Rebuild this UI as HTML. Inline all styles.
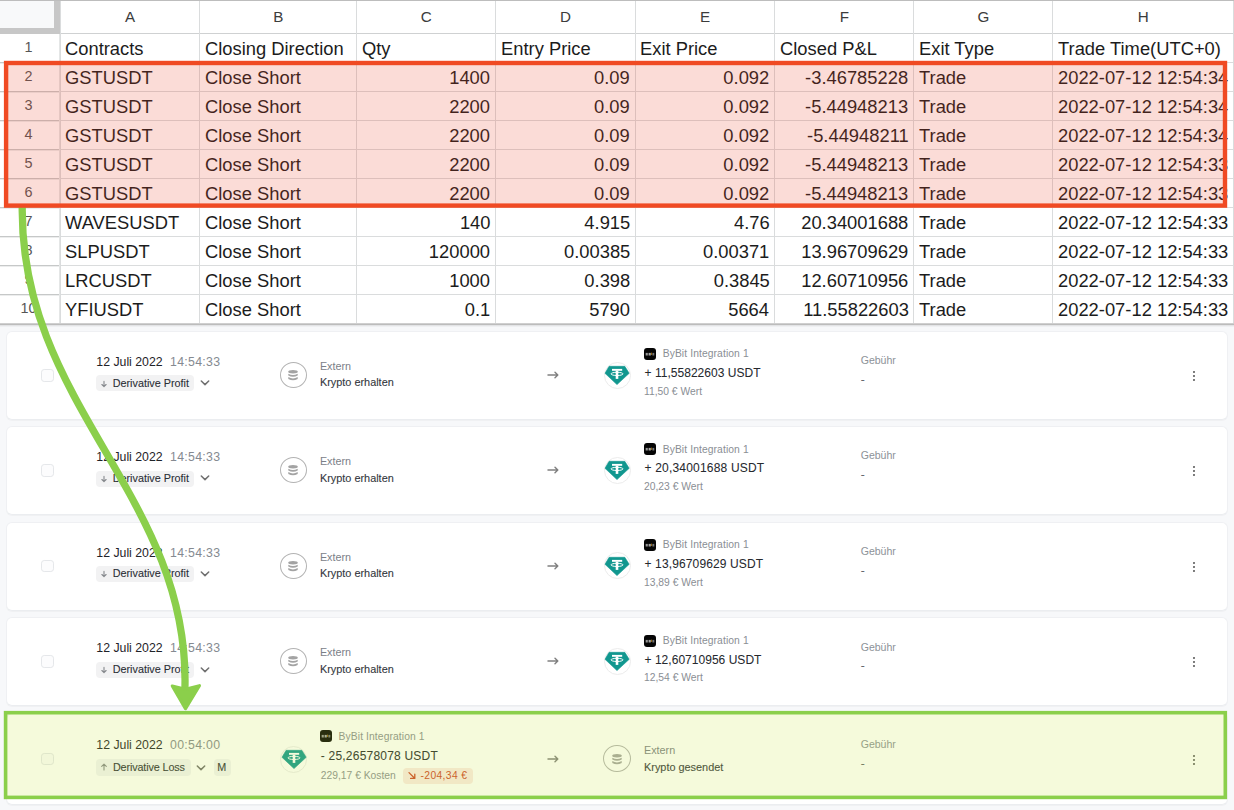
<!DOCTYPE html>
<html><head><meta charset="utf-8"><style>
html,body{margin:0;padding:0;width:1234px;height:810px;overflow:hidden;background:#f7f8fa}
body{position:relative;font-family:"Liberation Sans", sans-serif}
.t{position:absolute;white-space:nowrap}
.r{position:absolute}
</style></head><body>
<div class="r" style="left:0px;top:0px;width:1234px;height:324px;background:#fff"></div>
<div class="r" style="left:0px;top:1px;width:54px;height:27px;background:#f8f9fa"></div>
<div class="r" style="left:54px;top:0px;width:6px;height:33.7px;background:#c7c7c7"></div>
<div class="r" style="left:0px;top:28px;width:60px;height:5.7px;background:#c7c7c7"></div>
<div class="r" style="left:0px;top:0px;width:1234px;height:1px;background:#bdbdbd"></div>
<div class="r" style="left:60px;top:33px;width:1174px;height:1px;background:#cfd1d2"></div>
<div class="r" style="left:60px;top:62px;width:1174px;height:1px;background:#dadcdd"></div>
<div class="r" style="left:0px;top:62px;width:60px;height:1px;background:#c6c8c8"></div>
<div class="r" style="left:0px;top:63px;width:60px;height:1px;background:#eceded"></div>
<div class="r" style="left:60px;top:91px;width:1174px;height:1px;background:#dadcdd"></div>
<div class="r" style="left:0px;top:91px;width:60px;height:1px;background:#c6c8c8"></div>
<div class="r" style="left:0px;top:92px;width:60px;height:1px;background:#eceded"></div>
<div class="r" style="left:60px;top:120px;width:1174px;height:1px;background:#dadcdd"></div>
<div class="r" style="left:0px;top:120px;width:60px;height:1px;background:#c6c8c8"></div>
<div class="r" style="left:0px;top:121px;width:60px;height:1px;background:#eceded"></div>
<div class="r" style="left:60px;top:149px;width:1174px;height:1px;background:#dadcdd"></div>
<div class="r" style="left:0px;top:149px;width:60px;height:1px;background:#c6c8c8"></div>
<div class="r" style="left:0px;top:150px;width:60px;height:1px;background:#eceded"></div>
<div class="r" style="left:60px;top:178px;width:1174px;height:1px;background:#dadcdd"></div>
<div class="r" style="left:0px;top:178px;width:60px;height:1px;background:#c6c8c8"></div>
<div class="r" style="left:0px;top:179px;width:60px;height:1px;background:#eceded"></div>
<div class="r" style="left:60px;top:207px;width:1174px;height:1px;background:#dadcdd"></div>
<div class="r" style="left:0px;top:207px;width:60px;height:1px;background:#c6c8c8"></div>
<div class="r" style="left:0px;top:208px;width:60px;height:1px;background:#eceded"></div>
<div class="r" style="left:60px;top:236px;width:1174px;height:1px;background:#dadcdd"></div>
<div class="r" style="left:0px;top:236px;width:60px;height:1px;background:#c6c8c8"></div>
<div class="r" style="left:0px;top:237px;width:60px;height:1px;background:#eceded"></div>
<div class="r" style="left:60px;top:265px;width:1174px;height:1px;background:#dadcdd"></div>
<div class="r" style="left:0px;top:265px;width:60px;height:1px;background:#c6c8c8"></div>
<div class="r" style="left:0px;top:266px;width:60px;height:1px;background:#eceded"></div>
<div class="r" style="left:60px;top:294px;width:1174px;height:1px;background:#dadcdd"></div>
<div class="r" style="left:0px;top:294px;width:60px;height:1px;background:#c6c8c8"></div>
<div class="r" style="left:0px;top:295px;width:60px;height:1px;background:#eceded"></div>
<div class="r" style="left:0px;top:323px;width:1234px;height:1px;background:#cfcfcf"></div>
<div class="r" style="left:0px;top:324px;width:1234px;height:1px;background:#bcbcbc"></div>
<div class="r" style="left:59.5px;top:1px;width:1px;height:322px;background:#dadcdd"></div>
<div class="r" style="left:59px;top:34px;width:1px;height:289px;background:#e4e6e6"></div>
<div class="r" style="left:199px;top:1px;width:1px;height:322px;background:#dadcdd"></div>
<div class="r" style="left:356px;top:1px;width:1px;height:322px;background:#dadcdd"></div>
<div class="r" style="left:495px;top:1px;width:1px;height:322px;background:#dadcdd"></div>
<div class="r" style="left:634.5px;top:1px;width:1px;height:322px;background:#dadcdd"></div>
<div class="r" style="left:774px;top:1px;width:1px;height:322px;background:#dadcdd"></div>
<div class="r" style="left:913px;top:1px;width:1px;height:322px;background:#dadcdd"></div>
<div class="r" style="left:1052.4px;top:1px;width:1px;height:322px;background:#dadcdd"></div>
<div class="r" style="left:1232.5px;top:1px;width:1px;height:322px;background:#dadcdd"></div>
<div class="r" style="left:0px;top:325px;width:1234px;height:1px;background:#e3e4e6"></div>
<div class="r" style="left:0px;top:326px;width:1234px;height:1px;background:#eff0f2"></div>
<div class="t" style="left:-169.95px;width:600px;text-align:center;top:7.69px;font-size:15.2px;line-height:17.48px;color:#3c3c3c;font-weight:400;">A</div>
<div class="t" style="left:-21.70px;width:600px;text-align:center;top:7.69px;font-size:15.2px;line-height:17.48px;color:#3c3c3c;font-weight:400;">B</div>
<div class="t" style="left:126.30px;width:600px;text-align:center;top:7.69px;font-size:15.2px;line-height:17.48px;color:#3c3c3c;font-weight:400;">C</div>
<div class="t" style="left:265.55px;width:600px;text-align:center;top:7.69px;font-size:15.2px;line-height:17.48px;color:#3c3c3c;font-weight:400;">D</div>
<div class="t" style="left:405.05px;width:600px;text-align:center;top:7.69px;font-size:15.2px;line-height:17.48px;color:#3c3c3c;font-weight:400;">E</div>
<div class="t" style="left:544.30px;width:600px;text-align:center;top:7.69px;font-size:15.2px;line-height:17.48px;color:#3c3c3c;font-weight:400;">F</div>
<div class="t" style="left:683.50px;width:600px;text-align:center;top:7.69px;font-size:15.2px;line-height:17.48px;color:#3c3c3c;font-weight:400;">G</div>
<div class="t" style="left:843.30px;width:600px;text-align:center;top:7.69px;font-size:15.2px;line-height:17.48px;color:#3c3c3c;font-weight:400;">H</div>
<div class="t" style="left:-271.40px;width:600px;text-align:center;top:38.73px;font-size:14.4px;line-height:16.56px;color:#555;font-weight:400;">1</div>
<div class="t" style="left:-271.40px;width:600px;text-align:center;top:67.73px;font-size:14.4px;line-height:16.56px;color:#555;font-weight:400;">2</div>
<div class="t" style="left:-271.40px;width:600px;text-align:center;top:96.73px;font-size:14.4px;line-height:16.56px;color:#555;font-weight:400;">3</div>
<div class="t" style="left:-271.40px;width:600px;text-align:center;top:125.73px;font-size:14.4px;line-height:16.56px;color:#555;font-weight:400;">4</div>
<div class="t" style="left:-271.40px;width:600px;text-align:center;top:154.73px;font-size:14.4px;line-height:16.56px;color:#555;font-weight:400;">5</div>
<div class="t" style="left:-271.40px;width:600px;text-align:center;top:183.73px;font-size:14.4px;line-height:16.56px;color:#555;font-weight:400;">6</div>
<div class="t" style="left:-271.40px;width:600px;text-align:center;top:212.73px;font-size:14.4px;line-height:16.56px;color:#555;font-weight:400;">7</div>
<div class="t" style="left:-271.40px;width:600px;text-align:center;top:241.73px;font-size:14.4px;line-height:16.56px;color:#555;font-weight:400;">8</div>
<div class="t" style="left:-271.40px;width:600px;text-align:center;top:270.73px;font-size:14.4px;line-height:16.56px;color:#555;font-weight:400;">9</div>
<div class="t" style="left:-271.40px;width:600px;text-align:center;top:299.73px;font-size:14.4px;line-height:16.56px;color:#555;font-weight:400;">10</div>
<div class="t" style="left:65.00px;top:38.09px;font-size:18.9px;line-height:21.73px;color:#1c1c1c;font-weight:400;transform:scaleX(0.971);transform-origin:left 50%">Contracts</div>
<div class="t" style="left:204.50px;top:38.09px;font-size:18.9px;line-height:21.73px;color:#1c1c1c;font-weight:400;transform:scaleX(0.971);transform-origin:left 50%">Closing Direction</div>
<div class="t" style="left:361.50px;top:38.09px;font-size:18.9px;line-height:21.73px;color:#1c1c1c;font-weight:400;transform:scaleX(0.971);transform-origin:left 50%">Qty</div>
<div class="t" style="left:500.50px;top:38.09px;font-size:18.9px;line-height:21.73px;color:#1c1c1c;font-weight:400;transform:scaleX(0.971);transform-origin:left 50%">Entry Price</div>
<div class="t" style="left:640.00px;top:38.09px;font-size:18.9px;line-height:21.73px;color:#1c1c1c;font-weight:400;transform:scaleX(0.971);transform-origin:left 50%">Exit Price</div>
<div class="t" style="left:779.50px;top:38.09px;font-size:18.9px;line-height:21.73px;color:#1c1c1c;font-weight:400;transform:scaleX(0.971);transform-origin:left 50%">Closed P&amp;L</div>
<div class="t" style="left:918.50px;top:38.09px;font-size:18.9px;line-height:21.73px;color:#1c1c1c;font-weight:400;transform:scaleX(0.971);transform-origin:left 50%">Exit Type</div>
<div class="t" style="left:1057.90px;top:38.09px;font-size:18.9px;line-height:21.73px;color:#1c1c1c;font-weight:400;transform:scaleX(0.971);transform-origin:left 50%">Trade Time(UTC+0)</div>
<div class="t" style="left:65.00px;top:67.09px;font-size:18.9px;line-height:21.73px;color:#1c1c1c;font-weight:400;transform:scaleX(0.971);transform-origin:left 50%">GSTUSDT</div>
<div class="t" style="left:204.50px;top:67.09px;font-size:18.9px;line-height:21.73px;color:#1c1c1c;font-weight:400;transform:scaleX(0.971);transform-origin:left 50%">Close Short</div>
<div class="t" style="right:743.50px;top:67.09px;font-size:18.9px;line-height:21.73px;color:#1c1c1c;font-weight:400;transform:scaleX(0.971);transform-origin:right 50%">1400</div>
<div class="t" style="right:604.00px;top:67.09px;font-size:18.9px;line-height:21.73px;color:#1c1c1c;font-weight:400;transform:scaleX(0.971);transform-origin:right 50%">0.09</div>
<div class="t" style="right:464.50px;top:67.09px;font-size:18.9px;line-height:21.73px;color:#1c1c1c;font-weight:400;transform:scaleX(0.971);transform-origin:right 50%">0.092</div>
<div class="t" style="right:325.50px;top:67.09px;font-size:18.9px;line-height:21.73px;color:#1c1c1c;font-weight:400;transform:scaleX(0.971);transform-origin:right 50%">-3.46785228</div>
<div class="t" style="left:918.50px;top:67.09px;font-size:18.9px;line-height:21.73px;color:#1c1c1c;font-weight:400;transform:scaleX(0.971);transform-origin:left 50%">Trade</div>
<div class="t" style="left:1057.90px;top:67.09px;font-size:18.9px;line-height:21.73px;color:#1c1c1c;font-weight:400;transform:scaleX(0.971);transform-origin:left 50%">2022-07-12 12:54:34</div>
<div class="t" style="left:65.00px;top:96.09px;font-size:18.9px;line-height:21.73px;color:#1c1c1c;font-weight:400;transform:scaleX(0.971);transform-origin:left 50%">GSTUSDT</div>
<div class="t" style="left:204.50px;top:96.09px;font-size:18.9px;line-height:21.73px;color:#1c1c1c;font-weight:400;transform:scaleX(0.971);transform-origin:left 50%">Close Short</div>
<div class="t" style="right:743.50px;top:96.09px;font-size:18.9px;line-height:21.73px;color:#1c1c1c;font-weight:400;transform:scaleX(0.971);transform-origin:right 50%">2200</div>
<div class="t" style="right:604.00px;top:96.09px;font-size:18.9px;line-height:21.73px;color:#1c1c1c;font-weight:400;transform:scaleX(0.971);transform-origin:right 50%">0.09</div>
<div class="t" style="right:464.50px;top:96.09px;font-size:18.9px;line-height:21.73px;color:#1c1c1c;font-weight:400;transform:scaleX(0.971);transform-origin:right 50%">0.092</div>
<div class="t" style="right:325.50px;top:96.09px;font-size:18.9px;line-height:21.73px;color:#1c1c1c;font-weight:400;transform:scaleX(0.971);transform-origin:right 50%">-5.44948213</div>
<div class="t" style="left:918.50px;top:96.09px;font-size:18.9px;line-height:21.73px;color:#1c1c1c;font-weight:400;transform:scaleX(0.971);transform-origin:left 50%">Trade</div>
<div class="t" style="left:1057.90px;top:96.09px;font-size:18.9px;line-height:21.73px;color:#1c1c1c;font-weight:400;transform:scaleX(0.971);transform-origin:left 50%">2022-07-12 12:54:34</div>
<div class="t" style="left:65.00px;top:125.09px;font-size:18.9px;line-height:21.73px;color:#1c1c1c;font-weight:400;transform:scaleX(0.971);transform-origin:left 50%">GSTUSDT</div>
<div class="t" style="left:204.50px;top:125.09px;font-size:18.9px;line-height:21.73px;color:#1c1c1c;font-weight:400;transform:scaleX(0.971);transform-origin:left 50%">Close Short</div>
<div class="t" style="right:743.50px;top:125.09px;font-size:18.9px;line-height:21.73px;color:#1c1c1c;font-weight:400;transform:scaleX(0.971);transform-origin:right 50%">2200</div>
<div class="t" style="right:604.00px;top:125.09px;font-size:18.9px;line-height:21.73px;color:#1c1c1c;font-weight:400;transform:scaleX(0.971);transform-origin:right 50%">0.09</div>
<div class="t" style="right:464.50px;top:125.09px;font-size:18.9px;line-height:21.73px;color:#1c1c1c;font-weight:400;transform:scaleX(0.971);transform-origin:right 50%">0.092</div>
<div class="t" style="right:325.50px;top:125.09px;font-size:18.9px;line-height:21.73px;color:#1c1c1c;font-weight:400;transform:scaleX(0.971);transform-origin:right 50%">-5.44948211</div>
<div class="t" style="left:918.50px;top:125.09px;font-size:18.9px;line-height:21.73px;color:#1c1c1c;font-weight:400;transform:scaleX(0.971);transform-origin:left 50%">Trade</div>
<div class="t" style="left:1057.90px;top:125.09px;font-size:18.9px;line-height:21.73px;color:#1c1c1c;font-weight:400;transform:scaleX(0.971);transform-origin:left 50%">2022-07-12 12:54:34</div>
<div class="t" style="left:65.00px;top:154.09px;font-size:18.9px;line-height:21.73px;color:#1c1c1c;font-weight:400;transform:scaleX(0.971);transform-origin:left 50%">GSTUSDT</div>
<div class="t" style="left:204.50px;top:154.09px;font-size:18.9px;line-height:21.73px;color:#1c1c1c;font-weight:400;transform:scaleX(0.971);transform-origin:left 50%">Close Short</div>
<div class="t" style="right:743.50px;top:154.09px;font-size:18.9px;line-height:21.73px;color:#1c1c1c;font-weight:400;transform:scaleX(0.971);transform-origin:right 50%">2200</div>
<div class="t" style="right:604.00px;top:154.09px;font-size:18.9px;line-height:21.73px;color:#1c1c1c;font-weight:400;transform:scaleX(0.971);transform-origin:right 50%">0.09</div>
<div class="t" style="right:464.50px;top:154.09px;font-size:18.9px;line-height:21.73px;color:#1c1c1c;font-weight:400;transform:scaleX(0.971);transform-origin:right 50%">0.092</div>
<div class="t" style="right:325.50px;top:154.09px;font-size:18.9px;line-height:21.73px;color:#1c1c1c;font-weight:400;transform:scaleX(0.971);transform-origin:right 50%">-5.44948213</div>
<div class="t" style="left:918.50px;top:154.09px;font-size:18.9px;line-height:21.73px;color:#1c1c1c;font-weight:400;transform:scaleX(0.971);transform-origin:left 50%">Trade</div>
<div class="t" style="left:1057.90px;top:154.09px;font-size:18.9px;line-height:21.73px;color:#1c1c1c;font-weight:400;transform:scaleX(0.971);transform-origin:left 50%">2022-07-12 12:54:33</div>
<div class="t" style="left:65.00px;top:183.09px;font-size:18.9px;line-height:21.73px;color:#1c1c1c;font-weight:400;transform:scaleX(0.971);transform-origin:left 50%">GSTUSDT</div>
<div class="t" style="left:204.50px;top:183.09px;font-size:18.9px;line-height:21.73px;color:#1c1c1c;font-weight:400;transform:scaleX(0.971);transform-origin:left 50%">Close Short</div>
<div class="t" style="right:743.50px;top:183.09px;font-size:18.9px;line-height:21.73px;color:#1c1c1c;font-weight:400;transform:scaleX(0.971);transform-origin:right 50%">2200</div>
<div class="t" style="right:604.00px;top:183.09px;font-size:18.9px;line-height:21.73px;color:#1c1c1c;font-weight:400;transform:scaleX(0.971);transform-origin:right 50%">0.09</div>
<div class="t" style="right:464.50px;top:183.09px;font-size:18.9px;line-height:21.73px;color:#1c1c1c;font-weight:400;transform:scaleX(0.971);transform-origin:right 50%">0.092</div>
<div class="t" style="right:325.50px;top:183.09px;font-size:18.9px;line-height:21.73px;color:#1c1c1c;font-weight:400;transform:scaleX(0.971);transform-origin:right 50%">-5.44948213</div>
<div class="t" style="left:918.50px;top:183.09px;font-size:18.9px;line-height:21.73px;color:#1c1c1c;font-weight:400;transform:scaleX(0.971);transform-origin:left 50%">Trade</div>
<div class="t" style="left:1057.90px;top:183.09px;font-size:18.9px;line-height:21.73px;color:#1c1c1c;font-weight:400;transform:scaleX(0.971);transform-origin:left 50%">2022-07-12 12:54:33</div>
<div class="t" style="left:65.00px;top:212.09px;font-size:18.9px;line-height:21.73px;color:#1c1c1c;font-weight:400;transform:scaleX(0.971);transform-origin:left 50%">WAVESUSDT</div>
<div class="t" style="left:204.50px;top:212.09px;font-size:18.9px;line-height:21.73px;color:#1c1c1c;font-weight:400;transform:scaleX(0.971);transform-origin:left 50%">Close Short</div>
<div class="t" style="right:743.50px;top:212.09px;font-size:18.9px;line-height:21.73px;color:#1c1c1c;font-weight:400;transform:scaleX(0.971);transform-origin:right 50%">140</div>
<div class="t" style="right:604.00px;top:212.09px;font-size:18.9px;line-height:21.73px;color:#1c1c1c;font-weight:400;transform:scaleX(0.971);transform-origin:right 50%">4.915</div>
<div class="t" style="right:464.50px;top:212.09px;font-size:18.9px;line-height:21.73px;color:#1c1c1c;font-weight:400;transform:scaleX(0.971);transform-origin:right 50%">4.76</div>
<div class="t" style="right:325.50px;top:212.09px;font-size:18.9px;line-height:21.73px;color:#1c1c1c;font-weight:400;transform:scaleX(0.971);transform-origin:right 50%">20.34001688</div>
<div class="t" style="left:918.50px;top:212.09px;font-size:18.9px;line-height:21.73px;color:#1c1c1c;font-weight:400;transform:scaleX(0.971);transform-origin:left 50%">Trade</div>
<div class="t" style="left:1057.90px;top:212.09px;font-size:18.9px;line-height:21.73px;color:#1c1c1c;font-weight:400;transform:scaleX(0.971);transform-origin:left 50%">2022-07-12 12:54:33</div>
<div class="t" style="left:65.00px;top:241.09px;font-size:18.9px;line-height:21.73px;color:#1c1c1c;font-weight:400;transform:scaleX(0.971);transform-origin:left 50%">SLPUSDT</div>
<div class="t" style="left:204.50px;top:241.09px;font-size:18.9px;line-height:21.73px;color:#1c1c1c;font-weight:400;transform:scaleX(0.971);transform-origin:left 50%">Close Short</div>
<div class="t" style="right:743.50px;top:241.09px;font-size:18.9px;line-height:21.73px;color:#1c1c1c;font-weight:400;transform:scaleX(0.971);transform-origin:right 50%">120000</div>
<div class="t" style="right:604.00px;top:241.09px;font-size:18.9px;line-height:21.73px;color:#1c1c1c;font-weight:400;transform:scaleX(0.971);transform-origin:right 50%">0.00385</div>
<div class="t" style="right:464.50px;top:241.09px;font-size:18.9px;line-height:21.73px;color:#1c1c1c;font-weight:400;transform:scaleX(0.971);transform-origin:right 50%">0.00371</div>
<div class="t" style="right:325.50px;top:241.09px;font-size:18.9px;line-height:21.73px;color:#1c1c1c;font-weight:400;transform:scaleX(0.971);transform-origin:right 50%">13.96709629</div>
<div class="t" style="left:918.50px;top:241.09px;font-size:18.9px;line-height:21.73px;color:#1c1c1c;font-weight:400;transform:scaleX(0.971);transform-origin:left 50%">Trade</div>
<div class="t" style="left:1057.90px;top:241.09px;font-size:18.9px;line-height:21.73px;color:#1c1c1c;font-weight:400;transform:scaleX(0.971);transform-origin:left 50%">2022-07-12 12:54:33</div>
<div class="t" style="left:65.00px;top:270.09px;font-size:18.9px;line-height:21.73px;color:#1c1c1c;font-weight:400;transform:scaleX(0.971);transform-origin:left 50%">LRCUSDT</div>
<div class="t" style="left:204.50px;top:270.09px;font-size:18.9px;line-height:21.73px;color:#1c1c1c;font-weight:400;transform:scaleX(0.971);transform-origin:left 50%">Close Short</div>
<div class="t" style="right:743.50px;top:270.09px;font-size:18.9px;line-height:21.73px;color:#1c1c1c;font-weight:400;transform:scaleX(0.971);transform-origin:right 50%">1000</div>
<div class="t" style="right:604.00px;top:270.09px;font-size:18.9px;line-height:21.73px;color:#1c1c1c;font-weight:400;transform:scaleX(0.971);transform-origin:right 50%">0.398</div>
<div class="t" style="right:464.50px;top:270.09px;font-size:18.9px;line-height:21.73px;color:#1c1c1c;font-weight:400;transform:scaleX(0.971);transform-origin:right 50%">0.3845</div>
<div class="t" style="right:325.50px;top:270.09px;font-size:18.9px;line-height:21.73px;color:#1c1c1c;font-weight:400;transform:scaleX(0.971);transform-origin:right 50%">12.60710956</div>
<div class="t" style="left:918.50px;top:270.09px;font-size:18.9px;line-height:21.73px;color:#1c1c1c;font-weight:400;transform:scaleX(0.971);transform-origin:left 50%">Trade</div>
<div class="t" style="left:1057.90px;top:270.09px;font-size:18.9px;line-height:21.73px;color:#1c1c1c;font-weight:400;transform:scaleX(0.971);transform-origin:left 50%">2022-07-12 12:54:33</div>
<div class="t" style="left:65.00px;top:299.09px;font-size:18.9px;line-height:21.73px;color:#1c1c1c;font-weight:400;transform:scaleX(0.971);transform-origin:left 50%">YFIUSDT</div>
<div class="t" style="left:204.50px;top:299.09px;font-size:18.9px;line-height:21.73px;color:#1c1c1c;font-weight:400;transform:scaleX(0.971);transform-origin:left 50%">Close Short</div>
<div class="t" style="right:743.50px;top:299.09px;font-size:18.9px;line-height:21.73px;color:#1c1c1c;font-weight:400;transform:scaleX(0.971);transform-origin:right 50%">0.1</div>
<div class="t" style="right:604.00px;top:299.09px;font-size:18.9px;line-height:21.73px;color:#1c1c1c;font-weight:400;transform:scaleX(0.971);transform-origin:right 50%">5790</div>
<div class="t" style="right:464.50px;top:299.09px;font-size:18.9px;line-height:21.73px;color:#1c1c1c;font-weight:400;transform:scaleX(0.971);transform-origin:right 50%">5664</div>
<div class="t" style="right:325.50px;top:299.09px;font-size:18.9px;line-height:21.73px;color:#1c1c1c;font-weight:400;transform:scaleX(0.971);transform-origin:right 50%">11.55822603</div>
<div class="t" style="left:918.50px;top:299.09px;font-size:18.9px;line-height:21.73px;color:#1c1c1c;font-weight:400;transform:scaleX(0.971);transform-origin:left 50%">Trade</div>
<div class="t" style="left:1057.90px;top:299.09px;font-size:18.9px;line-height:21.73px;color:#1c1c1c;font-weight:400;transform:scaleX(0.971);transform-origin:left 50%">2022-07-12 12:54:33</div>
<div class="r" style="left:0px;top:327px;width:1234px;height:483px;background:#f7f8fa"></div>
<div class="r" style="left:6px;top:331px;width:1221.5px;height:89px;background:#fff;border:1px solid #eff0f3;border-bottom-color:#ebedf0;box-shadow:0 1px 0 #f0f1f3;border-radius:6px;box-sizing:border-box"></div>
<div class="r" style="left:41px;top:369px;width:12.5px;height:12.5px;border:1px solid #e5e7ea;border-radius:3.2px;box-sizing:border-box;background:#fcfcfd"></div>
<div class="t" style="left:96.30px;top:354.87px;font-size:12.3px;line-height:14.14px;color:#1f2328;font-weight:400;">12 Juli 2022</div>
<div class="t" style="left:170.00px;top:354.87px;font-size:12.3px;line-height:14.14px;color:#858a91;font-weight:400;letter-spacing:0.3px">14:54:33</div>
<div class="r" style="left:96px;top:375.3px;width:98px;height:16.1px;background:#f2f2f3;border-radius:4px"></div>
<svg class="r" style="left:99.5px;top:379.5px" width="8" height="8" viewBox="0 0 8 8"><path d="M4 1.4 V6.5 M1.9 4.5 L4 6.6 L6.1 4.5" fill="none" stroke="#85888c" stroke-width="1.1" stroke-linecap="round" stroke-linejoin="round"/></svg>
<div class="t" style="left:112.70px;top:376.65px;font-size:10.8px;line-height:12.42px;color:#2b2f36;font-weight:400;-webkit-text-stroke:0.1px currentColor">Derivative Profit</div>
<svg class="r" style="left:199.6px;top:379.1px" width="10" height="8" viewBox="0 0 10 8"><path d="M1.3 2 L5 5.6 L8.7 2" fill="none" stroke="#707070" stroke-width="1.5" stroke-linecap="round" stroke-linejoin="round"/></svg>
<div class="r" style="left:280px;top:362px;width:27px;height:26px;border:1px solid #b3b3b3;border-radius:50%;box-sizing:border-box"></div>
<svg class="r" style="left:286.4px;top:367.8px" width="14" height="14" viewBox="-7 -7 14 14"><g fill="#a3a3a3"><ellipse cx="0" cy="-3.3" rx="4.8" ry="1.7"/><path d="M-4.7 -1.3 Q0 1.3 4.7 -1.3 V0.5 Q0 3.1 -4.7 0.5Z"/><path d="M-4.7 2.1 Q0 4.7 4.7 2.1 V4 Q0 6.6 -4.7 4Z"/></g></svg>
<div class="t" style="left:319.90px;top:359.95px;font-size:10.8px;line-height:12.42px;color:#7b8088;font-weight:400;">Extern</div>
<div class="t" style="left:319.90px;top:376.45px;font-size:10.9px;line-height:12.54px;color:#34383e;font-weight:400;-webkit-text-stroke:0.1px currentColor">Krypto erhalten</div>
<svg class="r" style="left:546px;top:370px" width="14" height="10" viewBox="0 0 14 10"><path d="M2 5 H11.6 M9 2.3 L11.8 5 L9 7.7" fill="none" stroke="#808080" stroke-width="1.45" stroke-linecap="round" stroke-linejoin="round"/></svg>
<div class="r" style="left:603.5px;top:361.5px;width:27px;height:27px;border:1px solid #ececec;border-radius:50%;background:#fff;box-sizing:border-box"></div>
<svg class="r" style="left:603px;top:361px" width="28" height="28" viewBox="-14 -14 28 28"><path d="M-7.9 -8.7 H7.8 L12.2 -1.7 L0 9.6 L-12 -1.7 Z" fill="#11978f" stroke="#11978f" stroke-width="0.6" stroke-linejoin="round"/><g fill="#fff"><rect x="-5" y="-6.1" width="10.2" height="1.9"/><rect x="-1.3" y="-4.4" width="2.6" height="8.3"/></g><ellipse cx="0" cy="-1.1" rx="6" ry="1.6" fill="none" stroke="#fff" stroke-width="1"/></svg>
<div class="r" style="left:643.7px;top:348.1px;width:12.1px;height:12px;background:#050505;border-radius:3px"></div><svg class="r" style="left:643.7px;top:348.1px" width="12" height="12" viewBox="0 0 12 12"><g fill="#a8a8a8"><rect x="1.7" y="4.9" width="1.2" height="2.6"/><rect x="3.1" y="4.9" width="1.4" height="2.6" opacity=".8"/><rect x="5" y="4.9" width="1.8" height="2.6"/><rect x="8.4" y="4.9" width="1.9" height="2.6" opacity=".7"/></g><rect x="7.1" y="4.6" width="0.9" height="2.4" fill="#9a6c12"/></svg>
<div class="t" style="left:662.70px;top:348.31px;font-size:10.3px;line-height:11.85px;color:#8a8e94;font-weight:400;letter-spacing:0.1px">ByBit Integration 1</div>
<div class="t" style="left:644.50px;top:367.14px;font-size:12.0px;line-height:13.8px;color:#26292e;font-weight:400;-webkit-text-stroke:0.05px currentColor;letter-spacing:0.03px">+ 11,55822603 USDT</div>
<div class="t" style="left:644.00px;top:385.91px;font-size:10.3px;line-height:11.85px;color:#8a8e94;font-weight:400;">11,50 € Wert</div>
<div class="t" style="left:860.70px;top:354.18px;font-size:10.55px;line-height:12.13px;color:#8d9298;font-weight:400;">Gebühr</div>
<div class="t" style="left:861.00px;top:372.93px;font-size:10.5px;line-height:12.07px;color:#5f6368;font-weight:400;-webkit-text-stroke:0.3px currentColor">-</div>
<svg class="r" style="left:1190.5px;top:370px" width="6" height="12" viewBox="-3 -6 6 12"><g fill="#5c5c5c"><circle cx="0" cy="-3.95" r="1.05"/><circle cx="0" cy="0" r="1.05"/><circle cx="0" cy="3.95" r="1.05"/></g></svg>
<div class="r" style="left:6px;top:426.2px;width:1221.5px;height:89px;background:#fff;border:1px solid #eff0f3;border-bottom-color:#ebedf0;box-shadow:0 1px 0 #f0f1f3;border-radius:6px;box-sizing:border-box"></div>
<div class="r" style="left:41px;top:464.2px;width:12.5px;height:12.5px;border:1px solid #e5e7ea;border-radius:3.2px;box-sizing:border-box;background:#fcfcfd"></div>
<div class="t" style="left:96.30px;top:450.07px;font-size:12.3px;line-height:14.14px;color:#1f2328;font-weight:400;">12 Juli 2022</div>
<div class="t" style="left:170.00px;top:450.07px;font-size:12.3px;line-height:14.14px;color:#858a91;font-weight:400;letter-spacing:0.3px">14:54:33</div>
<div class="r" style="left:96px;top:470.5px;width:98px;height:16.1px;background:#f2f2f3;border-radius:4px"></div>
<svg class="r" style="left:99.5px;top:474.7px" width="8" height="8" viewBox="0 0 8 8"><path d="M4 1.4 V6.5 M1.9 4.5 L4 6.6 L6.1 4.5" fill="none" stroke="#85888c" stroke-width="1.1" stroke-linecap="round" stroke-linejoin="round"/></svg>
<div class="t" style="left:112.70px;top:471.85px;font-size:10.8px;line-height:12.42px;color:#2b2f36;font-weight:400;-webkit-text-stroke:0.1px currentColor">Derivative Profit</div>
<svg class="r" style="left:199.6px;top:474.3px" width="10" height="8" viewBox="0 0 10 8"><path d="M1.3 2 L5 5.6 L8.7 2" fill="none" stroke="#707070" stroke-width="1.5" stroke-linecap="round" stroke-linejoin="round"/></svg>
<div class="r" style="left:280px;top:457.2px;width:27px;height:26px;border:1px solid #b3b3b3;border-radius:50%;box-sizing:border-box"></div>
<svg class="r" style="left:286.4px;top:463.0px" width="14" height="14" viewBox="-7 -7 14 14"><g fill="#a3a3a3"><ellipse cx="0" cy="-3.3" rx="4.8" ry="1.7"/><path d="M-4.7 -1.3 Q0 1.3 4.7 -1.3 V0.5 Q0 3.1 -4.7 0.5Z"/><path d="M-4.7 2.1 Q0 4.7 4.7 2.1 V4 Q0 6.6 -4.7 4Z"/></g></svg>
<div class="t" style="left:319.90px;top:455.15px;font-size:10.8px;line-height:12.42px;color:#7b8088;font-weight:400;">Extern</div>
<div class="t" style="left:319.90px;top:471.65px;font-size:10.9px;line-height:12.54px;color:#34383e;font-weight:400;-webkit-text-stroke:0.1px currentColor">Krypto erhalten</div>
<svg class="r" style="left:546px;top:465.2px" width="14" height="10" viewBox="0 0 14 10"><path d="M2 5 H11.6 M9 2.3 L11.8 5 L9 7.7" fill="none" stroke="#808080" stroke-width="1.45" stroke-linecap="round" stroke-linejoin="round"/></svg>
<div class="r" style="left:603.5px;top:456.7px;width:27px;height:27px;border:1px solid #ececec;border-radius:50%;background:#fff;box-sizing:border-box"></div>
<svg class="r" style="left:603px;top:456.2px" width="28" height="28" viewBox="-14 -14 28 28"><path d="M-7.9 -8.7 H7.8 L12.2 -1.7 L0 9.6 L-12 -1.7 Z" fill="#11978f" stroke="#11978f" stroke-width="0.6" stroke-linejoin="round"/><g fill="#fff"><rect x="-5" y="-6.1" width="10.2" height="1.9"/><rect x="-1.3" y="-4.4" width="2.6" height="8.3"/></g><ellipse cx="0" cy="-1.1" rx="6" ry="1.6" fill="none" stroke="#fff" stroke-width="1"/></svg>
<div class="r" style="left:643.7px;top:443.3px;width:12.1px;height:12px;background:#050505;border-radius:3px"></div><svg class="r" style="left:643.7px;top:443.3px" width="12" height="12" viewBox="0 0 12 12"><g fill="#a8a8a8"><rect x="1.7" y="4.9" width="1.2" height="2.6"/><rect x="3.1" y="4.9" width="1.4" height="2.6" opacity=".8"/><rect x="5" y="4.9" width="1.8" height="2.6"/><rect x="8.4" y="4.9" width="1.9" height="2.6" opacity=".7"/></g><rect x="7.1" y="4.6" width="0.9" height="2.4" fill="#9a6c12"/></svg>
<div class="t" style="left:662.70px;top:443.51px;font-size:10.3px;line-height:11.85px;color:#8a8e94;font-weight:400;letter-spacing:0.1px">ByBit Integration 1</div>
<div class="t" style="left:644.50px;top:462.34px;font-size:12.0px;line-height:13.8px;color:#26292e;font-weight:400;-webkit-text-stroke:0.05px currentColor;letter-spacing:0.19px">+ 20,34001688 USDT</div>
<div class="t" style="left:644.00px;top:481.11px;font-size:10.3px;line-height:11.85px;color:#8a8e94;font-weight:400;">20,23 € Wert</div>
<div class="t" style="left:860.70px;top:449.38px;font-size:10.55px;line-height:12.13px;color:#8d9298;font-weight:400;">Gebühr</div>
<div class="t" style="left:861.00px;top:468.13px;font-size:10.5px;line-height:12.07px;color:#5f6368;font-weight:400;-webkit-text-stroke:0.3px currentColor">-</div>
<svg class="r" style="left:1190.5px;top:465.2px" width="6" height="12" viewBox="-3 -6 6 12"><g fill="#5c5c5c"><circle cx="0" cy="-3.95" r="1.05"/><circle cx="0" cy="0" r="1.05"/><circle cx="0" cy="3.95" r="1.05"/></g></svg>
<div class="r" style="left:6px;top:521.8px;width:1221.5px;height:89px;background:#fff;border:1px solid #eff0f3;border-bottom-color:#ebedf0;box-shadow:0 1px 0 #f0f1f3;border-radius:6px;box-sizing:border-box"></div>
<div class="r" style="left:41px;top:559.8px;width:12.5px;height:12.5px;border:1px solid #e5e7ea;border-radius:3.2px;box-sizing:border-box;background:#fcfcfd"></div>
<div class="t" style="left:96.30px;top:545.67px;font-size:12.3px;line-height:14.14px;color:#1f2328;font-weight:400;">12 Juli 2022</div>
<div class="t" style="left:170.00px;top:545.67px;font-size:12.3px;line-height:14.14px;color:#858a91;font-weight:400;letter-spacing:0.3px">14:54:33</div>
<div class="r" style="left:96px;top:566.0999999999999px;width:98px;height:16.1px;background:#f2f2f3;border-radius:4px"></div>
<svg class="r" style="left:99.5px;top:570.3px" width="8" height="8" viewBox="0 0 8 8"><path d="M4 1.4 V6.5 M1.9 4.5 L4 6.6 L6.1 4.5" fill="none" stroke="#85888c" stroke-width="1.1" stroke-linecap="round" stroke-linejoin="round"/></svg>
<div class="t" style="left:112.70px;top:567.45px;font-size:10.8px;line-height:12.42px;color:#2b2f36;font-weight:400;-webkit-text-stroke:0.1px currentColor">Derivative Profit</div>
<svg class="r" style="left:199.6px;top:569.9px" width="10" height="8" viewBox="0 0 10 8"><path d="M1.3 2 L5 5.6 L8.7 2" fill="none" stroke="#707070" stroke-width="1.5" stroke-linecap="round" stroke-linejoin="round"/></svg>
<div class="r" style="left:280px;top:552.8px;width:27px;height:26px;border:1px solid #b3b3b3;border-radius:50%;box-sizing:border-box"></div>
<svg class="r" style="left:286.4px;top:558.5999999999999px" width="14" height="14" viewBox="-7 -7 14 14"><g fill="#a3a3a3"><ellipse cx="0" cy="-3.3" rx="4.8" ry="1.7"/><path d="M-4.7 -1.3 Q0 1.3 4.7 -1.3 V0.5 Q0 3.1 -4.7 0.5Z"/><path d="M-4.7 2.1 Q0 4.7 4.7 2.1 V4 Q0 6.6 -4.7 4Z"/></g></svg>
<div class="t" style="left:319.90px;top:550.75px;font-size:10.8px;line-height:12.42px;color:#7b8088;font-weight:400;">Extern</div>
<div class="t" style="left:319.90px;top:567.25px;font-size:10.9px;line-height:12.54px;color:#34383e;font-weight:400;-webkit-text-stroke:0.1px currentColor">Krypto erhalten</div>
<svg class="r" style="left:546px;top:560.8px" width="14" height="10" viewBox="0 0 14 10"><path d="M2 5 H11.6 M9 2.3 L11.8 5 L9 7.7" fill="none" stroke="#808080" stroke-width="1.45" stroke-linecap="round" stroke-linejoin="round"/></svg>
<div class="r" style="left:603.5px;top:552.3px;width:27px;height:27px;border:1px solid #ececec;border-radius:50%;background:#fff;box-sizing:border-box"></div>
<svg class="r" style="left:603px;top:551.8px" width="28" height="28" viewBox="-14 -14 28 28"><path d="M-7.9 -8.7 H7.8 L12.2 -1.7 L0 9.6 L-12 -1.7 Z" fill="#11978f" stroke="#11978f" stroke-width="0.6" stroke-linejoin="round"/><g fill="#fff"><rect x="-5" y="-6.1" width="10.2" height="1.9"/><rect x="-1.3" y="-4.4" width="2.6" height="8.3"/></g><ellipse cx="0" cy="-1.1" rx="6" ry="1.6" fill="none" stroke="#fff" stroke-width="1"/></svg>
<div class="r" style="left:643.7px;top:538.9px;width:12.1px;height:12px;background:#050505;border-radius:3px"></div><svg class="r" style="left:643.7px;top:538.9px" width="12" height="12" viewBox="0 0 12 12"><g fill="#a8a8a8"><rect x="1.7" y="4.9" width="1.2" height="2.6"/><rect x="3.1" y="4.9" width="1.4" height="2.6" opacity=".8"/><rect x="5" y="4.9" width="1.8" height="2.6"/><rect x="8.4" y="4.9" width="1.9" height="2.6" opacity=".7"/></g><rect x="7.1" y="4.6" width="0.9" height="2.4" fill="#9a6c12"/></svg>
<div class="t" style="left:662.70px;top:539.11px;font-size:10.3px;line-height:11.85px;color:#8a8e94;font-weight:400;letter-spacing:0.1px">ByBit Integration 1</div>
<div class="t" style="left:644.50px;top:557.94px;font-size:12.0px;line-height:13.8px;color:#26292e;font-weight:400;-webkit-text-stroke:0.05px currentColor;letter-spacing:0.13px">+ 13,96709629 USDT</div>
<div class="t" style="left:644.00px;top:576.71px;font-size:10.3px;line-height:11.85px;color:#8a8e94;font-weight:400;">13,89 € Wert</div>
<div class="t" style="left:860.70px;top:544.98px;font-size:10.55px;line-height:12.13px;color:#8d9298;font-weight:400;">Gebühr</div>
<div class="t" style="left:861.00px;top:563.73px;font-size:10.5px;line-height:12.07px;color:#5f6368;font-weight:400;-webkit-text-stroke:0.3px currentColor">-</div>
<svg class="r" style="left:1190.5px;top:560.8px" width="6" height="12" viewBox="-3 -6 6 12"><g fill="#5c5c5c"><circle cx="0" cy="-3.95" r="1.05"/><circle cx="0" cy="0" r="1.05"/><circle cx="0" cy="3.95" r="1.05"/></g></svg>
<div class="r" style="left:6px;top:617.4px;width:1221.5px;height:89px;background:#fff;border:1px solid #eff0f3;border-bottom-color:#ebedf0;box-shadow:0 1px 0 #f0f1f3;border-radius:6px;box-sizing:border-box"></div>
<div class="r" style="left:41px;top:655.4px;width:12.5px;height:12.5px;border:1px solid #e5e7ea;border-radius:3.2px;box-sizing:border-box;background:#fcfcfd"></div>
<div class="t" style="left:96.30px;top:641.27px;font-size:12.3px;line-height:14.14px;color:#1f2328;font-weight:400;">12 Juli 2022</div>
<div class="t" style="left:170.00px;top:641.27px;font-size:12.3px;line-height:14.14px;color:#858a91;font-weight:400;letter-spacing:0.3px">14:54:33</div>
<div class="r" style="left:96px;top:661.7px;width:98px;height:16.1px;background:#f2f2f3;border-radius:4px"></div>
<svg class="r" style="left:99.5px;top:665.9px" width="8" height="8" viewBox="0 0 8 8"><path d="M4 1.4 V6.5 M1.9 4.5 L4 6.6 L6.1 4.5" fill="none" stroke="#85888c" stroke-width="1.1" stroke-linecap="round" stroke-linejoin="round"/></svg>
<div class="t" style="left:112.70px;top:663.05px;font-size:10.8px;line-height:12.42px;color:#2b2f36;font-weight:400;-webkit-text-stroke:0.1px currentColor">Derivative Profit</div>
<svg class="r" style="left:199.6px;top:665.5px" width="10" height="8" viewBox="0 0 10 8"><path d="M1.3 2 L5 5.6 L8.7 2" fill="none" stroke="#707070" stroke-width="1.5" stroke-linecap="round" stroke-linejoin="round"/></svg>
<div class="r" style="left:280px;top:648.4px;width:27px;height:26px;border:1px solid #b3b3b3;border-radius:50%;box-sizing:border-box"></div>
<svg class="r" style="left:286.4px;top:654.2px" width="14" height="14" viewBox="-7 -7 14 14"><g fill="#a3a3a3"><ellipse cx="0" cy="-3.3" rx="4.8" ry="1.7"/><path d="M-4.7 -1.3 Q0 1.3 4.7 -1.3 V0.5 Q0 3.1 -4.7 0.5Z"/><path d="M-4.7 2.1 Q0 4.7 4.7 2.1 V4 Q0 6.6 -4.7 4Z"/></g></svg>
<div class="t" style="left:319.90px;top:646.35px;font-size:10.8px;line-height:12.42px;color:#7b8088;font-weight:400;">Extern</div>
<div class="t" style="left:319.90px;top:662.85px;font-size:10.9px;line-height:12.54px;color:#34383e;font-weight:400;-webkit-text-stroke:0.1px currentColor">Krypto erhalten</div>
<svg class="r" style="left:546px;top:656.4px" width="14" height="10" viewBox="0 0 14 10"><path d="M2 5 H11.6 M9 2.3 L11.8 5 L9 7.7" fill="none" stroke="#808080" stroke-width="1.45" stroke-linecap="round" stroke-linejoin="round"/></svg>
<div class="r" style="left:603.5px;top:647.9px;width:27px;height:27px;border:1px solid #ececec;border-radius:50%;background:#fff;box-sizing:border-box"></div>
<svg class="r" style="left:603px;top:647.4px" width="28" height="28" viewBox="-14 -14 28 28"><path d="M-7.9 -8.7 H7.8 L12.2 -1.7 L0 9.6 L-12 -1.7 Z" fill="#11978f" stroke="#11978f" stroke-width="0.6" stroke-linejoin="round"/><g fill="#fff"><rect x="-5" y="-6.1" width="10.2" height="1.9"/><rect x="-1.3" y="-4.4" width="2.6" height="8.3"/></g><ellipse cx="0" cy="-1.1" rx="6" ry="1.6" fill="none" stroke="#fff" stroke-width="1"/></svg>
<div class="r" style="left:643.7px;top:634.5px;width:12.1px;height:12px;background:#050505;border-radius:3px"></div><svg class="r" style="left:643.7px;top:634.5px" width="12" height="12" viewBox="0 0 12 12"><g fill="#a8a8a8"><rect x="1.7" y="4.9" width="1.2" height="2.6"/><rect x="3.1" y="4.9" width="1.4" height="2.6" opacity=".8"/><rect x="5" y="4.9" width="1.8" height="2.6"/><rect x="8.4" y="4.9" width="1.9" height="2.6" opacity=".7"/></g><rect x="7.1" y="4.6" width="0.9" height="2.4" fill="#9a6c12"/></svg>
<div class="t" style="left:662.70px;top:634.71px;font-size:10.3px;line-height:11.85px;color:#8a8e94;font-weight:400;letter-spacing:0.1px">ByBit Integration 1</div>
<div class="t" style="left:644.50px;top:653.54px;font-size:12.0px;line-height:13.8px;color:#26292e;font-weight:400;-webkit-text-stroke:0.05px currentColor;letter-spacing:0.03px">+ 12,60710956 USDT</div>
<div class="t" style="left:644.00px;top:672.31px;font-size:10.3px;line-height:11.85px;color:#8a8e94;font-weight:400;">12,54 € Wert</div>
<div class="t" style="left:860.70px;top:640.58px;font-size:10.55px;line-height:12.13px;color:#8d9298;font-weight:400;">Gebühr</div>
<div class="t" style="left:861.00px;top:659.33px;font-size:10.5px;line-height:12.07px;color:#5f6368;font-weight:400;-webkit-text-stroke:0.3px currentColor">-</div>
<svg class="r" style="left:1190.5px;top:656.4px" width="6" height="12" viewBox="-3 -6 6 12"><g fill="#5c5c5c"><circle cx="0" cy="-3.95" r="1.05"/><circle cx="0" cy="0" r="1.05"/><circle cx="0" cy="3.95" r="1.05"/></g></svg>
<div class="r" style="left:6px;top:713px;width:1221.5px;height:92px;background:#fff;border:1px solid #eff0f3;border-bottom-color:#ebedf0;box-shadow:0 1px 0 #f0f1f3;border-radius:6px;box-sizing:border-box"></div>
<div class="r" style="left:41px;top:752.5px;width:12.5px;height:12.5px;border:1px solid #e5e7ea;border-radius:3.2px;box-sizing:border-box;background:#fcfcfd"></div>
<div class="t" style="left:96.30px;top:737.67px;font-size:12.3px;line-height:14.14px;color:#1f2328;font-weight:400;">12 Juli 2022</div>
<div class="t" style="left:170.00px;top:737.67px;font-size:12.3px;line-height:14.14px;color:#858a91;font-weight:400;letter-spacing:0.3px">00:54:00</div>
<div class="r" style="left:96px;top:759.4px;width:94.5px;height:16.4px;background:#f2f3f5;border-radius:4px"></div>
<svg class="r" style="left:99.5px;top:763.2px" width="8" height="8" viewBox="0 0 8 8"><path d="M4 6.9 V1.3 M1.7 3.4 L4 1.1 L6.3 3.4" fill="none" stroke="#85888c" stroke-width="1.1" stroke-linecap="round" stroke-linejoin="round"/></svg>
<div class="t" style="left:112.90px;top:760.65px;font-size:10.8px;line-height:12.42px;color:#2b2f36;font-weight:400;-webkit-text-stroke:0.1px currentColor;letter-spacing:-0.12px">Derivative Loss</div>
<svg class="r" style="left:196.2px;top:763.5px" width="10" height="8" viewBox="0 0 10 8"><path d="M1.3 2 L5 5.6 L8.7 2" fill="none" stroke="#707070" stroke-width="1.5" stroke-linecap="round" stroke-linejoin="round"/></svg>
<div class="r" style="left:213.6px;top:759.4px;width:17.8px;height:16.4px;background:#f2f3f5;border-radius:4px"></div>
<div class="t" style="left:217.20px;top:760.65px;font-size:10.8px;line-height:12.42px;color:#2b2f36;font-weight:400;-webkit-text-stroke:0.1px currentColor">M</div>
<div class="r" style="left:280.1px;top:745.5px;width:27px;height:27px;border:1px solid #ececec;border-radius:50%;background:#fff;box-sizing:border-box"></div>
<svg class="r" style="left:279.6px;top:745px" width="28" height="28" viewBox="-14 -14 28 28"><path d="M-7.9 -8.7 H7.8 L12.2 -1.7 L0 9.6 L-12 -1.7 Z" fill="#11978f" stroke="#11978f" stroke-width="0.6" stroke-linejoin="round"/><g fill="#fff"><rect x="-5" y="-6.1" width="10.2" height="1.9"/><rect x="-1.3" y="-4.4" width="2.6" height="8.3"/></g><ellipse cx="0" cy="-1.1" rx="6" ry="1.6" fill="none" stroke="#fff" stroke-width="1"/></svg>
<div class="r" style="left:320.3px;top:730.3px;width:12.1px;height:12px;background:#050505;border-radius:3px"></div><svg class="r" style="left:320.3px;top:730.3px" width="12" height="12" viewBox="0 0 12 12"><g fill="#a8a8a8"><rect x="1.7" y="4.9" width="1.2" height="2.6"/><rect x="3.1" y="4.9" width="1.4" height="2.6" opacity=".8"/><rect x="5" y="4.9" width="1.8" height="2.6"/><rect x="8.4" y="4.9" width="1.9" height="2.6" opacity=".7"/></g><rect x="7.1" y="4.6" width="0.9" height="2.4" fill="#9a6c12"/></svg>
<div class="t" style="left:338.60px;top:730.71px;font-size:10.3px;line-height:11.85px;color:#8a8e94;font-weight:400;letter-spacing:0.1px">ByBit Integration 1</div>
<div class="t" style="left:320.80px;top:749.64px;font-size:12.0px;line-height:13.8px;color:#26292e;font-weight:400;-webkit-text-stroke:0.05px currentColor;letter-spacing:0.21px">- 25,26578078 USDT</div>
<div class="t" style="left:320.80px;top:769.91px;font-size:10.3px;line-height:11.85px;color:#8a8e94;font-weight:400;">229,17 € Kosten</div>
<div class="r" style="left:402.8px;top:767.8px;width:70.4px;height:16px;background:#fbe9e4;border-radius:4px"></div>
<svg class="r" style="left:404px;top:768px" width="14" height="14" viewBox="404 768 14 14"><path d="M409 772.6 L414.6 778.2 M410.6 778.4 H414.8 V774.2" fill="none" stroke="#cc4528" stroke-width="1.3" stroke-linecap="round" stroke-linejoin="round"/></svg>
<div class="t" style="left:420.60px;top:769.91px;font-size:10.3px;line-height:11.85px;color:#cc4528;font-weight:400;letter-spacing:0.35px">-204,34 €</div>
<svg class="r" style="left:546px;top:753.8px" width="14" height="10" viewBox="0 0 14 10"><path d="M2 5 H11.6 M9 2.3 L11.8 5 L9 7.7" fill="none" stroke="#808080" stroke-width="1.45" stroke-linecap="round" stroke-linejoin="round"/></svg>
<div class="r" style="left:603px;top:745px;width:27.5px;height:27px;border:1px solid #b3b3b3;border-radius:50%;box-sizing:border-box"></div>
<svg class="r" style="left:610px;top:751.6px" width="14" height="14" viewBox="-7 -7 14 14"><g fill="#a3a3a3"><ellipse cx="0" cy="-3.3" rx="4.8" ry="1.7"/><path d="M-4.7 -1.3 Q0 1.3 4.7 -1.3 V0.5 Q0 3.1 -4.7 0.5Z"/><path d="M-4.7 2.1 Q0 4.7 4.7 2.1 V4 Q0 6.6 -4.7 4Z"/></g></svg>
<div class="t" style="left:644.00px;top:743.95px;font-size:10.8px;line-height:12.42px;color:#7b8088;font-weight:400;">Extern</div>
<div class="t" style="left:644.00px;top:761.25px;font-size:10.9px;line-height:12.54px;color:#34383e;font-weight:400;-webkit-text-stroke:0.1px currentColor">Krypto gesendet</div>
<div class="t" style="left:860.70px;top:738.38px;font-size:10.55px;line-height:12.13px;color:#8d9298;font-weight:400;">Gebühr</div>
<div class="t" style="left:861.00px;top:756.93px;font-size:10.5px;line-height:12.07px;color:#5f6368;font-weight:400;-webkit-text-stroke:0.3px currentColor">-</div>
<svg class="r" style="left:1190.5px;top:753.9px" width="6" height="12" viewBox="-3 -6 6 12"><g fill="#5c5c5c"><circle cx="0" cy="-3.95" r="1.05"/><circle cx="0" cy="0" r="1.05"/><circle cx="0" cy="3.95" r="1.05"/></g></svg>
<svg class="r" style="left:0;top:0" width="1234" height="810" viewBox="0 0 1234 810"><defs><clipPath id="ac"><rect x="0" y="206" width="1234" height="604"/></clipPath></defs><path clip-path="url(#ac)" d="M22.38 200.15 C15.94 404.13 191.35 494.69 184.87 690.31" fill="none" stroke="#8bcf4b" stroke-width="7.3"/><path d="M172.3 686 L185.4 689.2 L199.4 685.7 L185.5 708.6 Z" fill="#8bcf4b" stroke="#8bcf4b" stroke-width="3.2" stroke-linejoin="round"/></svg>
<svg class="r" style="left:0;top:0" width="1234" height="810" viewBox="0 0 1234 810"><rect x="5.60" y="712.70" width="1219.70" height="84.70" fill="rgba(200,228,60,.185)"/><rect x="5.60" y="712.70" width="1219.70" height="84.70" fill="none" stroke="#8bcf4b" stroke-width="3.6"/></svg>
<svg class="r" style="left:0;top:0" width="1234" height="810" viewBox="0 0 1234 810"><rect x="6.10" y="63.00" width="1218.90" height="142.60" fill="rgba(236,70,40,.19)"/><rect x="6.10" y="63.00" width="1218.90" height="142.60" fill="none" stroke="#f04a23" stroke-width="4.4"/></svg>
</body></html>
